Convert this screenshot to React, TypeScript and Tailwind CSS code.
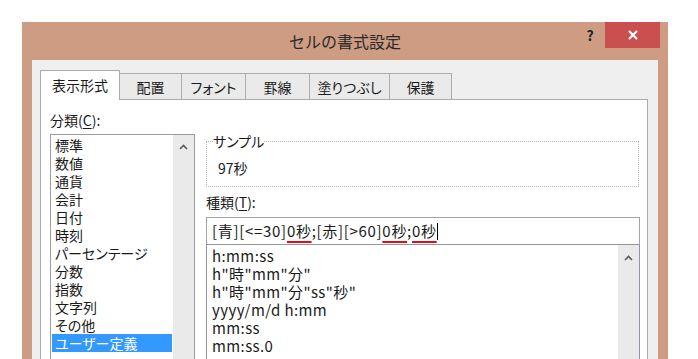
import React from 'react'

const categories = [
  '標準',
  '数値',
  '通貨',
  '会計',
  '日付',
  '時刻',
  'パーセンテージ',
  '分数',
  '指数',
  '文字列',
  'その他',
  'ユーザー定義',
]

const formats = [
  'h:mm:ss',
  'h"時"mm"分"',
  'h"時"mm"分"ss"秒"',
  'yyyy/m/d h:mm',
  'mm:ss',
  'mm:ss.0',
]

const tabs = [
  { label: '表示形式', w: 'w-[80px]' },
  { label: '配置', w: 'w-[62px]' },
  { label: 'フォント', w: 'w-[64px]' },
  { label: '罫線', w: 'w-[64px]' },
  { label: '塗りつぶし', w: 'w-[80px]' },
  { label: '保護', w: 'w-[62px]' },
]

function Chevron() {
  return (
    <svg width="9" height="6" viewBox="0 0 9 6">
      <path d="M1 5 L4.5 1.5 L8 5" fill="none" stroke="#5a5a5a" strokeWidth="1.6" />
    </svg>
  )
}

function Mark({ children }: { children: React.ReactNode }) {
  return (
    <span className="underline decoration-[#e01010] decoration-2 underline-offset-[4px]">
      {children}
    </span>
  )
}

export default function App() {
  return (
    <div className="h-[359px] w-[698px] overflow-hidden bg-white pl-[22px] pt-[22px] font-['Noto_Sans_CJK_JP','Noto_Sans',sans-serif] text-[#1a1a1a]">
      <div className="flex h-[360px] w-[646px] flex-col bg-[#cd9c82]">
        {/* title bar */}
        <div className="grid h-[38px] grid-cols-[1fr_auto_1fr]">
          <div />
          <div className="flex items-center text-[16px] text-[#2a2a2a]">セルの書式設定</div>
          <div className="flex items-start justify-end">
            <div className="flex h-[26px] w-[30px] items-center justify-center text-[14px] font-bold text-[#222]">?</div>
            <div className="mr-[8px] flex h-[26px] w-[55px] items-center justify-center bg-[#c9504f]">
              <svg width="10" height="10" viewBox="0 0 10 10">
                <path d="M1 1 L9 9 M9 1 L1 9" stroke="white" strokeWidth="2.2" />
              </svg>
            </div>
          </div>
        </div>

        {/* client area */}
        <div className="mx-[10px] flex flex-1 flex-col bg-[#efefef] pl-[8px] pr-[10px] pt-[10px] [font-feature-settings:'palt']">
          <div className="flex h-[29px] items-end">
            {tabs.map((t, i) =>
              i === 0 ? (
                <div
                  key={t.label}
                  className={`relative z-10 -mb-px flex h-[30px] items-center justify-center border border-b-0 border-[#acacac] bg-white text-[14px] ${t.w}`}
                >
                  {t.label}
                </div>
              ) : (
                <div
                  key={t.label}
                  className={`flex h-[26px] items-center justify-center border border-b-0 border-l-0 border-[#acacac] bg-[#eaeaea] pt-[1px] text-[14px] ${t.w}`}
                >
                  {t.label}
                </div>
              )
            )}
          </div>

          <div className="flex flex-1 gap-[11px] border border-[#acacac] bg-white pl-[9px] pt-[10px]">
            {/* category */}
            <div className="flex w-[145px] flex-col">
              <div className="h-[20px] text-[14px] leading-[20px]">
                分類(<span className="underline underline-offset-2">C</span>):
              </div>
              <div className="mt-[4px] flex flex-1 border border-[#9c9c9c] bg-white">
                <div className="flex flex-1 flex-col px-[1px] pt-[1px]">
                  {categories.map((c) => (
                    <div
                      key={c}
                      className={`h-[18px] pl-[3px] text-[14px] leading-[18px] ${
                        c === 'ユーザー定義' ? 'bg-[#3399ff] text-white' : ''
                      }`}
                    >
                      {c}
                    </div>
                  ))}
                </div>
                <div className="flex w-[21px] justify-center bg-[#eaeaea] pt-[9px]">
                  <Chevron />
                </div>
              </div>
            </div>

            {/* right side */}
            <div className="flex w-[434px] flex-col">
              <fieldset className="mt-[22px] w-[433px] border border-dotted border-[#b8b8b8] px-[6px] pb-[9px]">
                <legend className="h-[18px] text-[14px] leading-[18px]">サンプル</legend>
                <div className="mt-[9px] pl-[5px] text-[14px] leading-[18px]">97秒</div>
              </fieldset>

              <div className="mt-[5px] h-[20px] text-[14px] leading-[20px]">
                種類(<span className="underline underline-offset-2">T</span>):
              </div>

              <div className="mt-[5px] flex h-[27px] items-center border border-b-0 border-[#a4a4a4] pl-[5px] text-[15px] tracking-[0.7px]">
                <span>{'[青][<=30]'}</span>
                <Mark>0秒</Mark>
                <span>{';[赤][>60]'}</span>
                <Mark>0秒</Mark>
                <span>;</span>
                <Mark>0秒</Mark>
                <span className="h-[17px] w-px bg-black" />
              </div>

              <div className="flex flex-1 border border-[#8f94a8] bg-white">
                <div className="flex flex-1 flex-col pl-[5px] pt-[2px]">
                  {formats.map((f) => (
                    <div key={f} className="h-[18px] text-[15px] leading-[18px] tracking-[0.4px]">
                      {f}
                    </div>
                  ))}
                </div>
                <div className="flex w-[21px] justify-center bg-[#eaeaea] pt-[10px]">
                  <Chevron />
                </div>
              </div>
            </div>
          </div>
        </div>
      </div>
    </div>
  )
}
